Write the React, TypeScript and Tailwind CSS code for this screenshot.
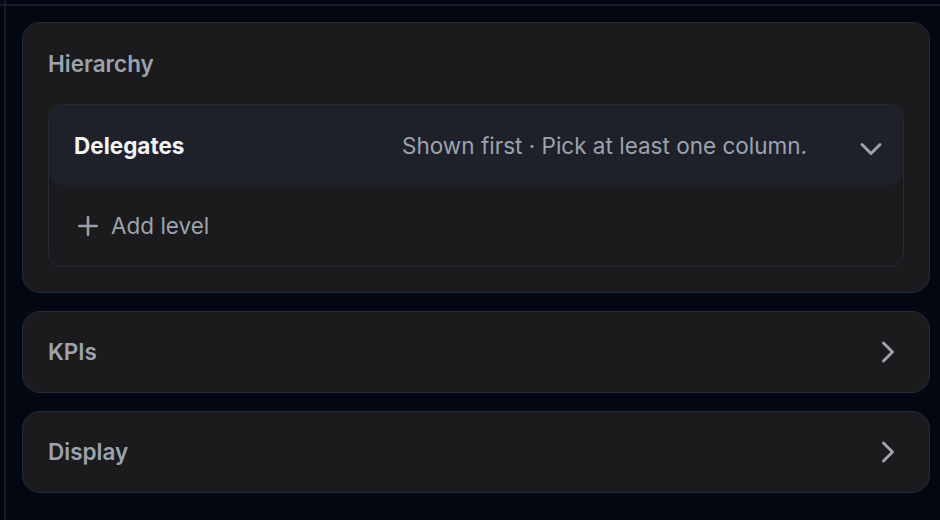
import { ChevronDown, ChevronRight, Plus } from "lucide-react";

function CollapsedSection({ title }: { title: string }) {
  return (
    <div className="rounded-[18px] border border-[#232c3a] bg-[#1b1b1d]">
      <div className="flex h-[80px] items-center justify-between px-[25px]">
        <span className="text-[22.5px] leading-[32px] font-semibold text-[#9ca3af]">{title}</span>
        <ChevronRight size={36} strokeWidth={2} className="-mr-[2px] text-[#9ca3af]" />
      </div>
    </div>
  );
}

export default function App() {
  return (
    <div className="h-[520px] w-[940px] overflow-hidden bg-[#030712] pl-[4px] font-['Inter',sans-serif]">
      <div className="h-[520px] border-l-2 border-[#161d29]">
        <div className="-ml-[6px] h-[6px] border-b-2 border-[#161d29]" />

        <div className="flex flex-col gap-[18px] pt-[16px] pr-[10px] pl-[16px]">
          {/* Hierarchy */}
          <div className="rounded-[18px] border border-[#232c3a] bg-[#1b1b1d] px-[25px] pt-[25px] pb-[25px]">
            <div className="mb-[24px] text-[22.5px] leading-[32px] font-semibold text-[#9ca3af]">Hierarchy</div>

            <div className="overflow-hidden rounded-[14px] border border-[#232b38]">
              <div className="flex h-[80px] items-center rounded-[13px] bg-[#1e212a] pt-[1px] pr-[14px] pl-[25px]">
                <span className="flex-1 text-[22.5px] leading-[32px] font-bold text-[#f3f4f6]">Delegates</span>
                <span className="text-[22.5px] leading-[32px] text-[#9ca3af]">Shown first · Pick at least one column.</span>
                <ChevronDown size={36} strokeWidth={2} className="mt-[6px] ml-[46px] text-[#9ca3af]" />
              </div>
              <button type="button" className="flex h-[81px] w-full items-center gap-[8px] pl-[24px] text-[#9ca3af]">
                <Plus size={30} strokeWidth={2} />
                <span className="text-[22.5px] leading-[32px]">Add level</span>
              </button>
            </div>
          </div>

          <CollapsedSection title="KPIs" />
          <CollapsedSection title="Display" />
        </div>
      </div>
    </div>
  );
}
